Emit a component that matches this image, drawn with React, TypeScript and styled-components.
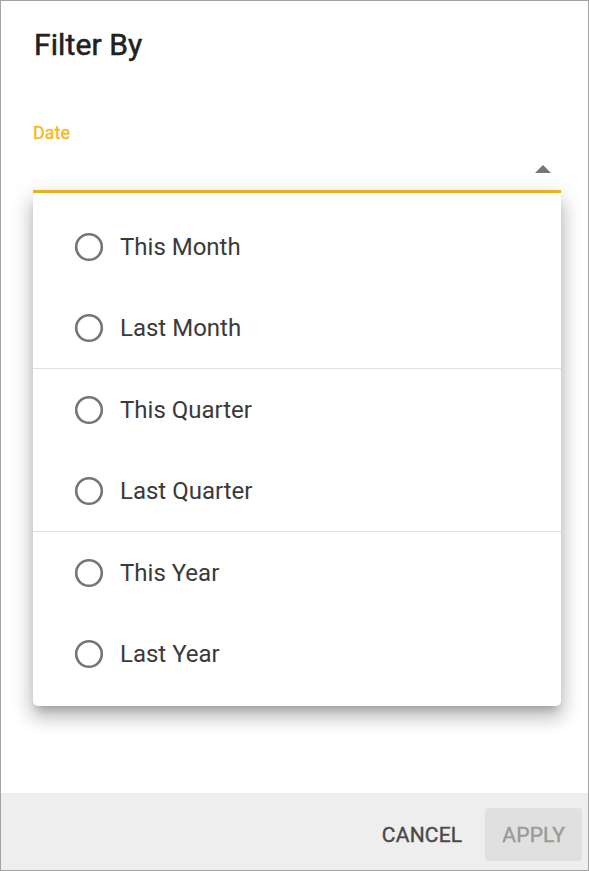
import React from "react";
import styled, { createGlobalStyle } from "styled-components";

const Global = createGlobalStyle`
  html, body { margin: 0; padding: 0; background: #ffffff; }
  body { font-family: Roboto, "Noto Sans", Arial, sans-serif; }
  * { box-sizing: border-box; }
`;

const Dialog = styled.div`
  width: 589px;
  height: 871px;
  border: 1px solid #a3a3a3;
  background: #ffffff;
  display: flex;
  flex-direction: column;
`;

const Content = styled.div`
  flex: 1;
  padding: 27px 27px 0 32px;
  display: flex;
  flex-direction: column;
`;

const Title = styled.h2`
  margin: 0 0 0 1px;
  font-size: 30px;
  line-height: 34px;
  font-weight: 400;
  -webkit-text-stroke: 0.55px currentColor;
  color: #212121;
  letter-spacing: 0.1px;
`;

const Field = styled.div`
  position: relative;
  margin-top: 61px;
  display: flex;
  flex-direction: column;
`;

const Label = styled.label`
  font-size: 18px;
  line-height: 20px;
  font-weight: 400;
  -webkit-text-stroke: 0.35px currentColor;
  color: #f6b81a;
`;

const SelectBox = styled.div`
  height: 50px;
  border-bottom: 3px solid #f5bb22;
  display: flex;
  align-items: center;
  justify-content: flex-end;
  padding-right: 10px;
`;

const Arrow = styled.svg`
  display: block;
  width: 16px;
  height: 8px;
  margin-top: 4px;
`;

const Menu = styled.ul`
  position: absolute;
  top: 100%;
  left: 0;
  right: 0;
  margin: 0;
  padding: 13px 0 12px;
  list-style: none;
  background: #ffffff;
  border-radius: 5px;
  box-shadow: 0 7px 8px -4px rgba(0, 0, 0, 0.22),
    0 12px 17px 2px rgba(0, 0, 0, 0.14), 0 5px 22px 4px rgba(0, 0, 0, 0.12);
  z-index: 2;
`;

const Item = styled.li`
  height: 81px;
  display: flex;
  align-items: center;
  padding-left: 41px;
  gap: 16px;
  font-size: 24px;
  color: #3a3a3a;
  cursor: pointer;
`;

const Divider = styled.li`
  height: 1px;
  background: #e0e0e0;
`;

const RadioIcon = styled.svg`
  width: 30px;
  height: 30px;
  flex: none;
`;

const Footer = styled.div`
  height: 77px;
  background: #eeeeee;
  display: flex;
  justify-content: flex-end;
  align-items: flex-start;
  padding: 15px 6px 0 0;
  gap: 6px;
`;

const Button = styled.button<{ $disabled?: boolean }>`
  height: 53px;
  padding: 0 17px;
  border: none;
  border-radius: 4px;
  font-family: Roboto, "Noto Sans", Arial, sans-serif;
  font-size: 21px;
  font-weight: 400;
  -webkit-text-stroke: 0.4px currentColor;
  letter-spacing: 0.2px;
  text-transform: uppercase;
  background: ${(p) => (p.$disabled ? "#e0e0e0" : "transparent")};
  color: ${(p) => (p.$disabled ? "#9a9a9a" : "#4a4a4a")};
  cursor: ${(p) => (p.$disabled ? "default" : "pointer")};
`;

const groups = [
  ["This Month", "Last Month"],
  ["This Quarter", "Last Quarter"],
  ["This Year", "Last Year"],
];

function Radio() {
  return (
    <RadioIcon viewBox="0 0 30 30">
      <circle cx="15" cy="15" r="12.8" fill="none" stroke="#757575" strokeWidth="2.6" />
    </RadioIcon>
  );
}

export default function App() {
  return (
    <>
      <Global />
      <Dialog>
        <Content>
          <Title>Filter By</Title>
          <Field>
            <Label>Date</Label>
            <SelectBox>
              <Arrow viewBox="0 0 16 8">
                <path d="M0 8 L8 0 L16 8 Z" fill="#757575" />
              </Arrow>
            </SelectBox>
            <Menu>
              {groups.map((g, gi) => (
                <React.Fragment key={gi}>
                  {gi > 0 && <Divider />}
                  {g.map((label) => (
                    <Item key={label}>
                      <Radio />
                      <span>{label}</span>
                    </Item>
                  ))}
                </React.Fragment>
              ))}
            </Menu>
          </Field>
        </Content>
        <Footer>
          <Button>Cancel</Button>
          <Button $disabled>Apply</Button>
        </Footer>
      </Dialog>
    </>
  );
}
